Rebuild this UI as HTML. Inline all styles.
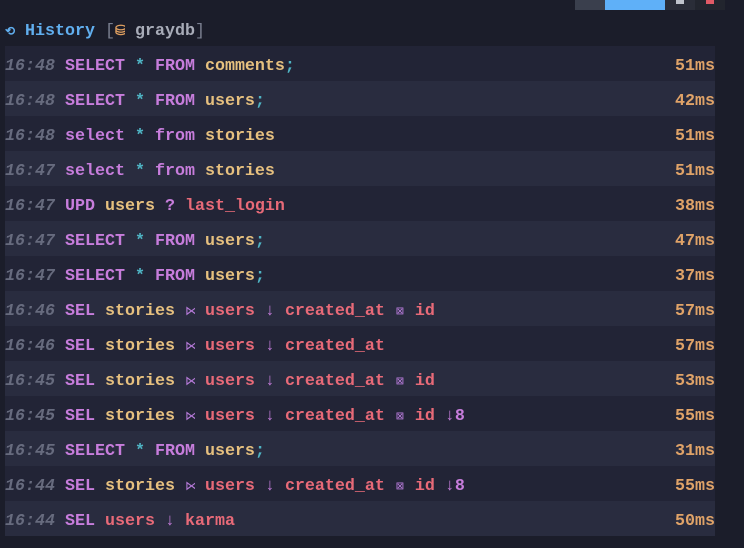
<!DOCTYPE html>
<html><head><style>
body{margin:0;width:744px;height:548px;background:#1b1d2a;font-family:"Liberation Mono",monospace;font-size:16.67px;font-weight:bold;overflow:hidden;position:relative}
.tab{position:absolute;top:0;height:10px}
.row{position:absolute;left:5px;width:710px;height:35px;line-height:35px;padding-top:3px;box-sizing:border-box;white-space:pre}
.e{background:#222436}.o{background:#292c3f}
.t{color:#676b7e;font-style:italic}
.k{color:#c77ddc}.y{color:#e6c07f}.r{color:#e86a78}.c{color:#4fb4c4}
.p{color:#b57ad8;font-weight:normal;display:inline-block;width:10px;overflow:hidden;text-align:center;font-size:13px;vertical-align:top}
.g{display:inline-block;width:10px;text-align:center;overflow:hidden;vertical-align:top}
.ms{position:absolute;right:0;top:3px;color:#e0a368}
#hdr{position:absolute;left:5px;top:19px;line-height:26px;white-space:pre;color:#7a7f90}
</style></head><body>
<div class="tab" style="left:575px;width:30px;background:#3a3f4d"></div>
<div class="tab" style="left:605px;width:60px;background:#5fb0f8"></div>
<div class="tab" style="left:665px;width:30px;background:#2a2d38"><div style="position:absolute;left:11px;top:0;width:8px;height:4px;background:#c0c4cc"></div></div>
<div class="tab" style="left:695px;width:30px;background:#22252e"><div style="position:absolute;left:11px;top:0;width:8px;height:4px;background:#e05a66"></div></div>
<div id="hdr"><span class="g" style="color:#61afef;font-size:12px">⟲</span> <span style="color:#61afef">History</span> <span style="font-weight:normal">[</span><span class="g" style="color:#e0a060;font-size:14px">⛁</span> <span style="color:#a8acb8">graydb</span><span style="font-weight:normal">]</span></div>

<div class="row e" style="top:46px"><span class="t">16:48</span> <span class="k">SELECT</span> <span class="c">*</span> <span class="k">FROM</span> <span class="y">comments</span><span class="c">;</span><span class="ms">51ms</span></div>
<div class="row o" style="top:81px"><span class="t">16:48</span> <span class="k">SELECT</span> <span class="c">*</span> <span class="k">FROM</span> <span class="y">users</span><span class="c">;</span><span class="ms">42ms</span></div>
<div class="row e" style="top:116px"><span class="t">16:48</span> <span class="k">select</span> <span class="c">*</span> <span class="k">from</span> <span class="y">stories</span><span class="ms">51ms</span></div>
<div class="row o" style="top:151px"><span class="t">16:47</span> <span class="k">select</span> <span class="c">*</span> <span class="k">from</span> <span class="y">stories</span><span class="ms">51ms</span></div>
<div class="row e" style="top:186px"><span class="t">16:47</span> <span class="k">UPD</span> <span class="y">users</span> <span class="k">?</span> <span class="r">last_login</span><span class="ms">38ms</span></div>
<div class="row o" style="top:221px"><span class="t">16:47</span> <span class="k">SELECT</span> <span class="c">*</span> <span class="k">FROM</span> <span class="y">users</span><span class="c">;</span><span class="ms">47ms</span></div>
<div class="row e" style="top:256px"><span class="t">16:47</span> <span class="k">SELECT</span> <span class="c">*</span> <span class="k">FROM</span> <span class="y">users</span><span class="c">;</span><span class="ms">37ms</span></div>
<div class="row o" style="top:291px"><span class="t">16:46</span> <span class="k">SEL</span> <span class="y">stories</span> <span class="p">⋈</span> <span class="r">users</span> <span class="k g">↓</span> <span class="r">created_at</span> <span class="p">⊠</span> <span class="r">id</span><span class="ms">57ms</span></div>
<div class="row e" style="top:326px"><span class="t">16:46</span> <span class="k">SEL</span> <span class="y">stories</span> <span class="p">⋈</span> <span class="r">users</span> <span class="k g">↓</span> <span class="r">created_at</span><span class="ms">57ms</span></div>
<div class="row o" style="top:361px"><span class="t">16:45</span> <span class="k">SEL</span> <span class="y">stories</span> <span class="p">⋈</span> <span class="r">users</span> <span class="k g">↓</span> <span class="r">created_at</span> <span class="p">⊠</span> <span class="r">id</span><span class="ms">53ms</span></div>
<div class="row e" style="top:396px"><span class="t">16:45</span> <span class="k">SEL</span> <span class="y">stories</span> <span class="p">⋈</span> <span class="r">users</span> <span class="k g">↓</span> <span class="r">created_at</span> <span class="p">⊠</span> <span class="r">id</span> <span class="k g">↓</span><span class="k">8</span><span class="ms">55ms</span></div>
<div class="row o" style="top:431px"><span class="t">16:45</span> <span class="k">SELECT</span> <span class="c">*</span> <span class="k">FROM</span> <span class="y">users</span><span class="c">;</span><span class="ms">31ms</span></div>
<div class="row e" style="top:466px"><span class="t">16:44</span> <span class="k">SEL</span> <span class="y">stories</span> <span class="p">⋈</span> <span class="r">users</span> <span class="k g">↓</span> <span class="r">created_at</span> <span class="p">⊠</span> <span class="r">id</span> <span class="k g">↓</span><span class="k">8</span><span class="ms">55ms</span></div>
<div class="row o" style="top:501px"><span class="t">16:44</span> <span class="k">SEL</span> <span class="r">users</span> <span class="k g">↓</span> <span class="r">karma</span><span class="ms">50ms</span></div>
</body></html>
